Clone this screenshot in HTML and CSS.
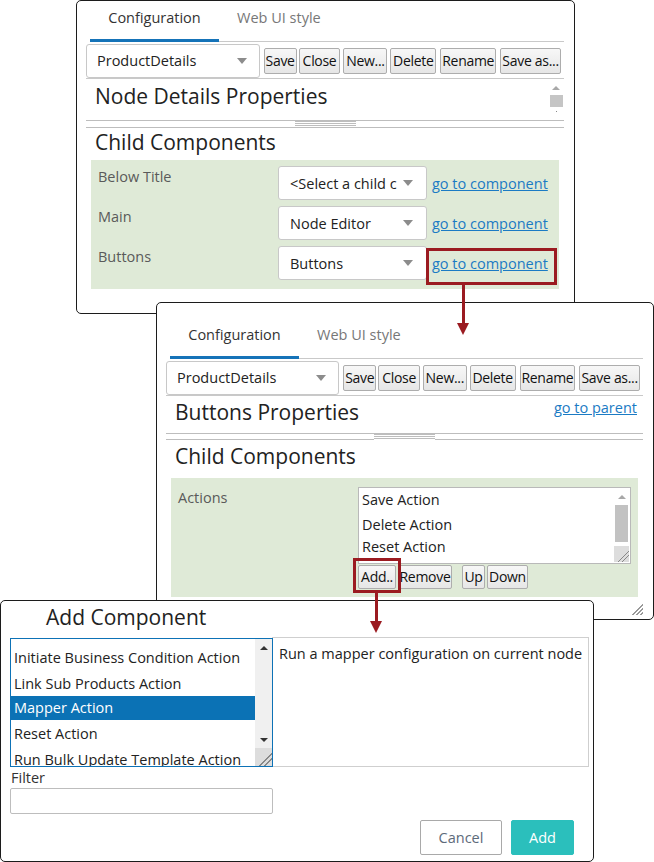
FILE: index.html
```html
<!DOCTYPE html>
<html>
<head>
<meta charset="utf-8">
<link rel="stylesheet" href="styles.css">
</head>
<body>
<div class="canvas">

  <div class="win w1">
    <div class="pane">
      <div class="tabs">
        <div class="tab active">Configuration</div>
        <div class="tab">Web UI style</div>
      </div>
      <div class="toolbar">
        <div class="select sel-main"><span class="sel-text">ProductDetails</span><i class="caret"></i></div>
        <button class="btn b-save">Save</button>
        <button class="btn b-close">Close</button>
        <button class="btn b-new">New...</button>
        <button class="btn b-delete">Delete</button>
        <button class="btn b-rename">Rename</button>
        <button class="btn b-saveas">Save as...</button>
      </div>
      <div class="props">
        <div class="props-title">Node Details Properties</div>
        <div class="vscroll"><i class="up"></i><i class="thumb"></i><i class="dot"></i></div>
      </div>
      <div class="splitter"><span class="grip"></span></div>
      <div class="section">Child Components</div>
      <div class="green">
        <div class="row">
          <div class="lbl">Below Title</div>
          <div class="select sel-child"><span class="sel-text">&lt;Select a child c</span><i class="caret"></i></div>
          <a class="link">go to component</a>
        </div>
        <div class="row">
          <div class="lbl">Main</div>
          <div class="select sel-child"><span class="sel-text">Node Editor</span><i class="caret"></i></div>
          <a class="link">go to component</a>
        </div>
        <div class="row">
          <div class="lbl">Buttons</div>
          <div class="select sel-child"><span class="sel-text">Buttons</span><i class="caret"></i></div>
          <a class="link">go to component</a>
        </div>
      </div>
    </div>
  </div>

  <div class="win w2">
    <div class="pane">
      <div class="tabs">
        <div class="tab active">Configuration</div>
        <div class="tab">Web UI style</div>
      </div>
      <div class="toolbar">
        <div class="select sel-main"><span class="sel-text">ProductDetails</span><i class="caret"></i></div>
        <button class="btn b-save">Save</button>
        <button class="btn b-close">Close</button>
        <button class="btn b-new">New...</button>
        <button class="btn b-delete">Delete</button>
        <button class="btn b-rename">Rename</button>
        <button class="btn b-saveas">Save as...</button>
      </div>
      <div class="props">
        <div class="props-title">Buttons Properties</div>
        <a class="link parent-link">go to parent</a>
      </div>
      <div class="splitter"><span class="grip"></span></div>
      <div class="section">Child Components</div>
      <div class="green">
        <div class="row row-list">
          <div class="lbl">Actions</div>
          <div class="list-col">
            <div class="listbox">
              <div class="items">
                <div class="item">Save Action</div>
                <div class="item">Delete Action</div>
                <div class="item">Reset Action</div>
              </div>
              <div class="lscroll">
                <i class="up"></i><i class="thumb"></i><i class="grip-corner"></i>
              </div>
            </div>
            <div class="list-btns">
              <button class="btn sm b-add">Add..</button>
              <button class="btn sm b-remove">Remove</button>
              <button class="btn sm b-up">Up</button>
              <button class="btn sm b-down">Down</button>
            </div>
          </div>
        </div>
      </div>
    </div>
    <i class="win-grip"></i>
  </div>

  <div class="win w3">
    <div class="dlg-title">Add Component</div>
    <div class="dlg-body">
      <div class="dlg-list">
        <div class="dlg-items">
          <div class="ditem">Initiate Business Condition Action</div>
          <div class="ditem">Link Sub Products Action</div>
          <div class="ditem selected">Mapper Action</div>
          <div class="ditem">Reset Action</div>
          <div class="ditem">Run Bulk Update Template Action</div>
        </div>
        <div class="dscroll">
          <i class="up"></i><i class="down"></i><i class="grip-corner"></i>
        </div>
      </div>
      <div class="dlg-desc">Run a mapper configuration on current node</div>
    </div>
    <div class="filter-lbl">Filter</div>
    <div class="filter-input"></div>
    <div class="dlg-actions">
      <button class="dbtn cancel">Cancel</button>
      <button class="dbtn primary">Add</button>
    </div>
  </div>

  <div class="hl hl1"></div>
  <div class="arrow a1"></div>
  <div class="hl hl2"></div>
  <div class="arrow a2"></div>

</div>
</body>
</html>
```

FILE: styles.css
```css
* { box-sizing: border-box; }
html, body { margin: 0; padding: 0; background: #fff; }
body {
  font-family: "Open Sans", "Noto Sans", sans-serif;
  font-size: 14.5px;
  color: #262626;
}
.canvas {
  position: relative;
  width: 654px;
  height: 862px;
  overflow: hidden;
  background: #fff;
}

/* windows on the desktop */
.win {
  position: absolute;
  background: #fff;
  border: 1px solid #1c1c1c;
  border-radius: 5px;
}
.w1 { left: 76px; top: 0; width: 499px; height: 314px; z-index: 1; }
.w2 { left: 156px; top: 302px; width: 498px; height: 318px; z-index: 2; }
.w3 { left: 0; top: 600px; width: 594px; height: 262px; z-index: 3; }

.pane {
  display: flex;
  flex-direction: column;
  padding: 0 10px 0 9px;
}

/* tabs */
.tabs {
  display: flex;
  margin-left: 4px;
  height: 41px;
  border-bottom: 1px solid #c9c9c9;
}
.tab {
  height: 41px;
  margin-bottom: -1px;
  padding: 7px 0 0;
  line-height: 20px;
  font-size: 14.5px;
  color: #777;
  border-bottom: 3px solid transparent;
  width: 129px;
  text-align: center;
  flex: none;
}
.tab + .tab { width: auto; padding-left: 18px; }
.tab.active { color: #333; border-bottom-color: #1573b8; }
.w2 .tabs { height: 56px; }
.w2 .tab { height: 56px; padding-top: 22px; }

/* toolbar */
.toolbar {
  display: flex;
  align-items: center;
  padding: 1px 0 0;
  height: 37px;
  border-bottom: 1px solid #c9c9c9;
}
.select {
  display: flex;
  align-items: center;
  height: 34px;
  border: 1px solid #c8c8c8;
  border-radius: 3px;
  background: #fff;
  padding: 0 12px 0 10px;
  color: #222;
  font-size: 14.5px;
}
.sel-main { width: 174px; margin-right: 4px; }
.sel-text { flex: 1; white-space: nowrap; overflow: hidden; }
.caret {
  flex: none;
  width: 0; height: 0;
  border-left: 5px solid transparent;
  border-right: 5px solid transparent;
  border-top: 6px solid #8c8c8c;
  margin-left: 4px;
}
.btn {
  font-family: "Open Sans", "Noto Sans", sans-serif;
  font-size: 14px;
  color: #111;
  height: 26px;
  padding: 0;
  margin: 0 3px 0 0;
  border: 1px solid #adadad;
  border-radius: 2px;
  background: linear-gradient(#f7f7f7, #e6e6e6);
  text-align: center;
  white-space: nowrap;
  letter-spacing: -0.3px;
  line-height: 24px;
}
.b-save { width: 33px; margin-right: 2px; }
.b-close { width: 42px; }
.b-new { width: 44px; }
.b-delete { width: 46px; margin-right: 4px; }
.b-rename { width: 56px; margin-right: 4px; }
.b-saveas { width: 61px; }

/* properties header */
.props {
  display: flex;
  align-items: flex-start;
  height: 41px;
  padding-left: 9px;
}
.w2 .props { height: 37px; }
.props-title {
  flex: 1;
  font-size: 21px;
  line-height: 28px;
  padding-top: 3px;
  color: #222;
}
.w2 .props-title { padding-top: 2px; }
.vscroll {
  width: 14px;
  height: 38px;
  margin-top: 1px;
  margin-right: 1px;
  display: flex;
  flex-direction: column;
  align-items: center;
}
.vscroll .up {
  margin-top: 6px;
  width: 0; height: 0;
  border-left: 4px solid transparent;
  border-right: 4px solid transparent;
  border-bottom: 4px solid #a8a8a8;
}
.vscroll .thumb { margin-top: 5px; width: 13px; height: 12px; background: #c5c5c5; }
.vscroll .dot { margin-top: 4px; width: 1px; height: 1px; background: #888; }

.link {
  color: #1b7bc4;
  text-decoration: underline;
  font-size: 14.5px;
  white-space: nowrap;
}
.parent-link { margin-top: 2px; margin-right: 6px; line-height: 20px; }

/* splitter */
.splitter {
  height: 8px;
  border-top: 1px solid #bdbdbd;
  border-bottom: 1px solid #bdbdbd;
  display: flex;
  justify-content: center;
  align-items: center;
}
.w2 .splitter { height: 7px; }
.grip {
  width: 61px;
  height: 6px;
  background: repeating-linear-gradient(#bdbdbd 0 1px, #fff 1px 2px);
}

.section {
  font-size: 21px;
  line-height: 28px;
  color: #222;
  padding-left: 9px;
  margin-bottom: 4px;
}
.w2 .section { margin-top: 2px; margin-bottom: 8px; }

/* green child components box */
.green {
  margin: 0 5px;
  background: #dfead7;
  padding: 6px 7px 9px;
  display: flex;
  flex-direction: column;
  gap: 6px;
}
.w2 .green { padding: 9px 7px 8px; }
.row { display: flex; align-items: center; height: 34px; }
.lbl {
  width: 180px;
  flex: none;
  align-self: flex-start;
  line-height: 22px;
  color: #5a5a5a;
  font-size: 14.5px;
}
.sel-child { width: 149px; padding: 0 13px 0 11px; }
.row .link { margin-left: 5px; }

.row-list { height: auto; align-items: flex-start; }
.list-col { display: flex; flex-direction: column; }
.listbox {
  width: 273px;
  height: 77px;
  border: 1px solid #b9b9b9;
  background: #fff;
  display: flex;
}
.items { flex: 1; padding: 0 0 0 3px; overflow: hidden; }
.item { line-height: 24px; color: #222; white-space: nowrap; }
.item + .item { margin-top: 1px; }
.item:last-child { margin-top: -2px; }
.lscroll {
  width: 15px;
  margin: 1px 1px 1px 0;
  display: flex;
  flex-direction: column;
  align-items: center;
}
.lscroll .up {
  margin-top: 6px;
  width: 0; height: 0;
  border-left: 4px solid transparent;
  border-right: 4px solid transparent;
  border-bottom: 4px solid #a8a8a8;
}
.lscroll .thumb { margin-top: 6px; width: 13px; height: 37px; background: #c2c2c2; }
.grip-corner {
  margin-top: auto;
  width: 15px;
  height: 16px;
  background:
    linear-gradient(135deg, transparent 0 62%, #888 62% 66%, transparent 66% 76%, #888 76% 80%, transparent 80%),
    #ddd;
}
.list-btns { display: flex; margin-top: 1px; }
.btn.sm { height: 24px; line-height: 22px; }
.b-add { width: 38px; margin-right: 2px; }
.b-remove { width: 54px; margin-right: 10px; }
.b-up { width: 23px; margin-right: 2px; }
.b-down { width: 41px; }

.win-grip {
  position: absolute;
  right: 10px;
  bottom: 4px;
  width: 13px;
  height: 13px;
  background: linear-gradient(135deg, transparent 0 55%, #999 55% 62%, transparent 62% 72%, #999 72% 79%, transparent 79% 86%, #999 86% 93%, transparent 93%);
}

/* dialog */
.dlg-title {
  font-size: 21px;
  line-height: 28px;
  color: #222;
  padding: 2px 0 0 45px;
}
.dlg-body {
  display: flex;
  margin: 7px 0 0 9px;
  height: 129px;
}
.dlg-list {
  position: relative;
  z-index: 1;
  width: 263px;
  height: 129px;
  border: 1px solid #0d72b6;
  display: flex;
  background: #fff;
}
.dlg-items { flex: 1; overflow: hidden; padding-top: 7px; }
.ditem { line-height: 24px; height: 25.5px; padding-left: 3px; color: #222; white-space: nowrap; }
.ditem.selected { background: #0b72b5; color: #fff; height: 24px; margin: -1px 0 2px; }
.dscroll {
  width: 17px;
  background: #f0f0f0;
  display: flex;
  flex-direction: column;
  align-items: center;
}
.dscroll .up {
  margin-top: 7px;
  width: 0; height: 0;
  border-left: 4px solid transparent;
  border-right: 4px solid transparent;
  border-bottom: 4px solid #333;
}
.dscroll .down {
  margin-top: 88px;
  width: 0; height: 0;
  border-left: 4px solid transparent;
  border-right: 4px solid transparent;
  border-top: 4px solid #333;
}
.dscroll .grip-corner { width: 17px; height: 18px; background-color: #ddd; }
.dlg-desc {
  width: 317px;
  height: 130px;
  margin-top: -1px;
  margin-left: -1px;
  border: 1px solid #cfcfcf;
  padding: 6px 0 0 6px;
  line-height: 20px;
  color: #222;
  white-space: nowrap;
}
.filter-lbl { margin: 1px 0 0 10px; line-height: 20px; color: #333; }
.filter-input {
  margin-left: 9px;
  width: 263px;
  height: 26px;
  border: 1px solid #bdbdbd;
  border-radius: 2px;
}
.dlg-actions {
  display: flex;
  justify-content: flex-end;
  gap: 9px;
  margin: 6px 19px 0 0;
}
.dbtn {
  font-family: "Open Sans", "Noto Sans", sans-serif;
  font-size: 14.5px;
  height: 35px;
  border-radius: 2px;
  padding: 0;
}
.dbtn.cancel { width: 82px; border: 1px solid #a9a9a9; background: #fff; color: #5d6a7a; }
.dbtn.primary { width: 63px; border: 1px solid #2bbfbc; background: #2bbfbc; color: #fff; }

/* annotation overlays */
.hl {
  position: absolute;
  border: 3px solid #9b1b21;
  z-index: 10;
}
.hl1 { left: 426px; top: 248px; width: 131px; height: 37px; }
.hl2 { left: 353px; top: 558px; width: 48px; height: 35px; }
.arrow {
  position: absolute;
  width: 3px;
  background: #9b1b21;
  z-index: 10;
}
.arrow::after {
  content: "";
  position: absolute;
  left: -5px;
  bottom: -12px;
  border-left: 6.5px solid transparent;
  border-right: 6.5px solid transparent;
  border-top: 12px solid #9b1b21;
}
.a1 { left: 462px; top: 284px; height: 39px; }
.a2 { left: 375px; top: 593px; height: 28px; }
```
